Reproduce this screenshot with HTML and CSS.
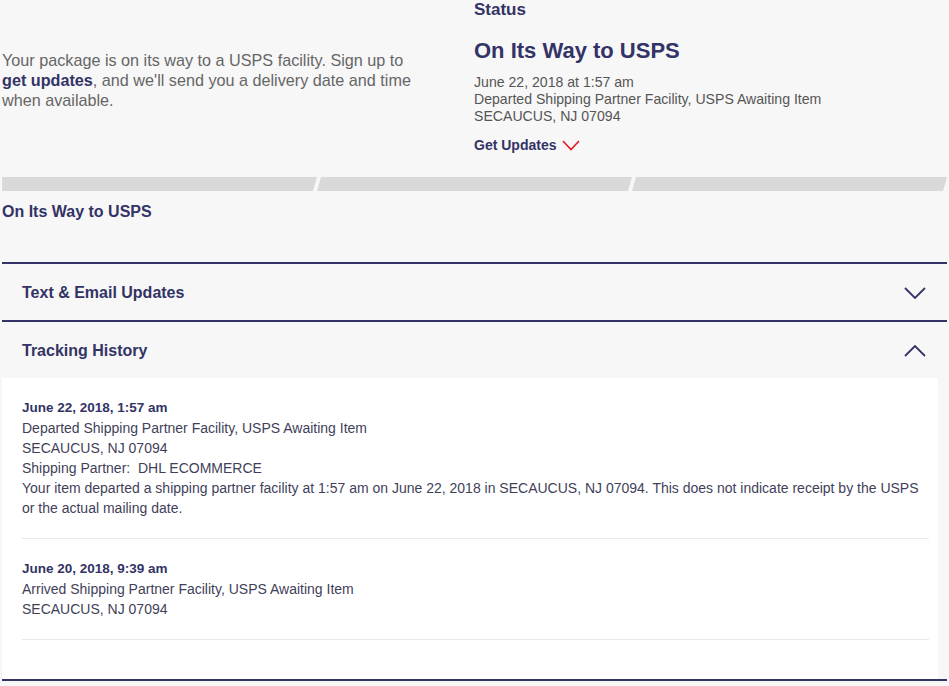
FILE: index.html
```html
<!DOCTYPE html>
<html lang="en">
<head>
<meta charset="utf-8">
<title>USPS Tracking</title>
<link rel="stylesheet" href="styles.css">
</head>
<body>
<div class="page">
  <section class="summary">
    <div class="summary-left">
      <p class="intro">Your package is on its way to a USPS facility. Sign up to <strong>get updates</strong>, and we'll send you a delivery date and time when available.</p>
    </div>
    <div class="summary-right">
      <div class="status-label">Status</div>
      <h1 class="status-title">On Its Way to USPS</h1>
      <div class="status-detail">
        <div>June 22, 2018 at 1:57 am</div>
        <div>Departed Shipping Partner Facility, USPS Awaiting Item</div>
        <div>SECAUCUS, NJ 07094</div>
      </div>
      <div class="get-updates">Get Updates
        <svg class="red-chev" width="18" height="11" viewBox="0 0 18 11"><path d="M1 1 L9 9.5 L17 1" fill="none" stroke="#e71921" stroke-width="1.6"/></svg>
      </div>
    </div>
  </section>

  <div class="progress">
    <span class="seg seg-first"></span>
    <span class="seg"></span>
    <span class="seg"></span>
  </div>
  <div class="progress-label">On Its Way to USPS</div>

  <div class="accordion">
    <div class="acc-head">
      <span>Text &amp; Email Updates</span>
      <svg class="chev" width="22" height="12" viewBox="0 0 22 12"><path d="M1 1 L11 11 L21 1" fill="none" stroke="#333366" stroke-width="1.8"/></svg>
    </div>
    <div class="acc-head">
      <span>Tracking History</span>
      <svg class="chev" width="22" height="12" viewBox="0 0 22 12"><path d="M1 11 L11 1 L21 11" fill="none" stroke="#333366" stroke-width="1.8"/></svg>
    </div>
    <div class="history">
      <div class="event">
        <div class="event-date">June 22, 2018, 1:57 am</div>
        <div>Departed Shipping Partner Facility, USPS Awaiting Item</div>
        <div>SECAUCUS, NJ 07094</div>
        <div>Shipping Partner:&nbsp; DHL ECOMMERCE</div>
        <div>Your item departed a shipping partner facility at 1:57 am on June 22, 2018 in SECAUCUS, NJ 07094. This does not indicate receipt by the USPS or the actual mailing date.</div>
      </div>
      <div class="event">
        <div class="event-date">June 20, 2018, 9:39 am</div>
        <div>Arrived Shipping Partner Facility, USPS Awaiting Item</div>
        <div>SECAUCUS, NJ 07094</div>
      </div>
    </div>
  </div>
</div>
</body>
</html>
```

FILE: styles.css
```css
html, body {
  margin: 0;
  padding: 0;
  background: #f7f7f7;
}
body {
  font-family: "Liberation Sans", Arial, Helvetica, sans-serif;
  color: #333366;
}
.page {
  padding: 0 2px;
  width: 945px;
}
.summary {
  display: grid;
  grid-template-columns: 472px 1fr;
}
.summary-left {
  padding-top: 50px;
}
.intro {
  margin: 0;
  font-size: 16.2px;
  line-height: 20px;
  color: #666666;
  width: 420px;
}
.intro strong {
  color: #333366;
}
.status-label {
  font-size: 17px;
  font-weight: bold;
  line-height: 20px;
}
.status-title {
  margin: 18px 0 0;
  font-size: 22px;
  line-height: 26px;
  font-weight: bold;
}
.status-detail {
  margin-top: 10px;
  font-size: 14.1px;
  line-height: 17px;
  color: #555555;
}
.get-updates {
  margin-top: 10px;
  font-size: 14px;
  font-weight: bold;
  line-height: 20px;
  display: flex;
  align-items: center;
  gap: 6px;
}
.red-chev {
  display: block;
  margin-top: 1px;
}
.progress {
  display: flex;
  margin-top: 22px;
  height: 14px;
}
.seg {
  flex: 1;
  background: #d9d9d9;
  clip-path: polygon(4px 0, 100% 0, calc(100% - 4px) 100%, 0 100%);
}
.seg-first {
  clip-path: polygon(0 0, 100% 0, calc(100% - 4px) 100%, 0 100%);
}
.progress-label {
  margin-top: 11px;
  font-size: 16px;
  font-weight: bold;
  line-height: 20px;
}
.accordion {
  margin-top: 40px;
  border-bottom: 2px solid #333366;
}
.acc-head {
  border-top: 2px solid #333366;
  display: flex;
  align-items: center;
  justify-content: space-between;
  padding: 1px 21px 0 20px;
  box-sizing: border-box;
  height: 58px;
  font-size: 16px;
  font-weight: bold;
}
.chev {
  display: block;
}
.history {
  background: #ffffff;
  margin-right: 9px;
  padding: 0 9px 39px 20px;
}
.event {
  padding: 20px 0;
  border-bottom: 1px solid #e9e9e9;
  font-size: 14px;
  line-height: 20px;
  color: #3f3f5a;
}
.event-date {
  font-weight: bold;
  font-size: 13.5px;
  line-height: 20px;
  color: #333366;
}
```
